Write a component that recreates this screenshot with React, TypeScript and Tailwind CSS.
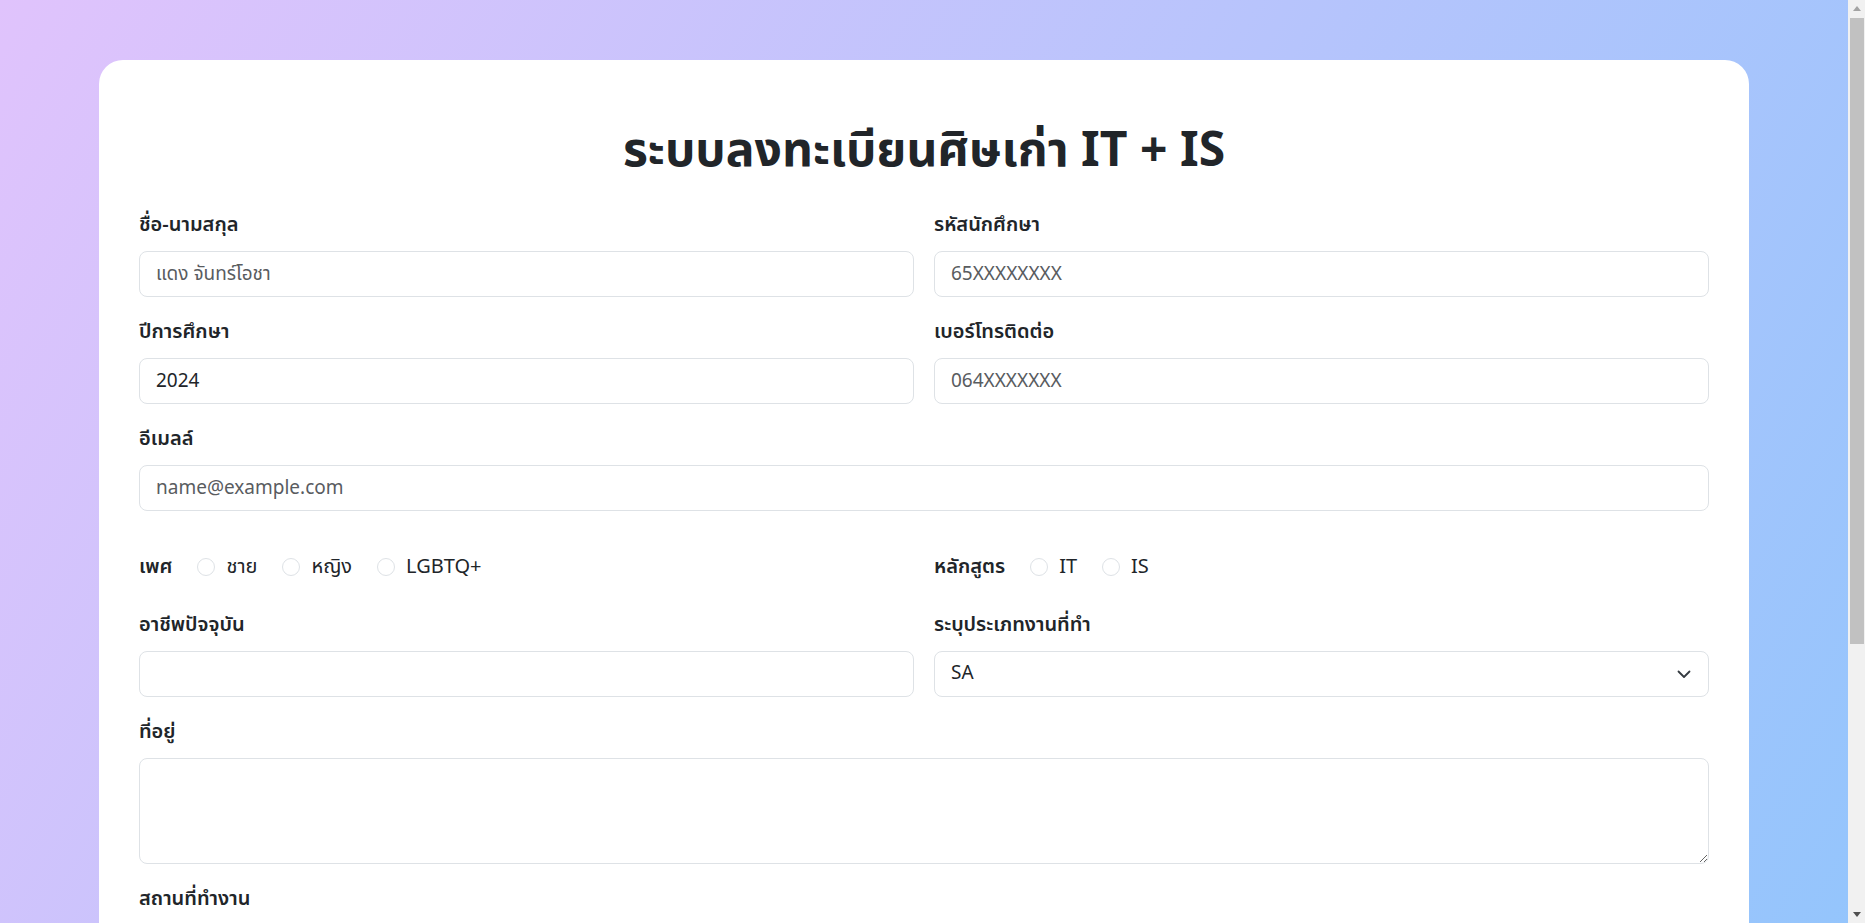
import { useState } from "react";

const FONT = `font-['Noto_Sans_Thai','Noto_Sans','Liberation_Sans',sans-serif]`;

function Field({ label, children }: { label: string; children: React.ReactNode }) {
  return (
    <div className="flex flex-col">
      <label className="text-[20px] leading-[24px] font-semibold text-[#212529] mb-[14px]">{label}</label>
      {children}
    </div>
  );
}

const inputCls =
  "w-full h-[46px] px-4 rounded-lg border border-[#dee2e6] bg-white text-[19px] text-[#212529] placeholder:text-[#595c5f] outline-none";

function Radio({ label }: { label: string }) {
  return (
    <label className="flex items-center gap-[11px] text-[20px] text-[#212529]">
      <span className="w-[18px] h-[18px] rounded-full border border-[#dee2e6] bg-white" />
      {label}
    </label>
  );
}

function Scrollbar() {
  return (
    <div className="w-[17px] h-full bg-[#f1f1f1] flex flex-col items-center shrink-0">
      <div className="h-[17px] flex items-center justify-center">
        <svg width="8" height="5" viewBox="0 0 8 5"><path d="M0 5 4 0 8 5Z" fill="#a3a3a3" /></svg>
      </div>
      <div className="w-[14px] h-[626px] bg-[#c1c1c1] mt-px" />
      <div className="flex-1" />
      <div className="h-[17px] flex items-center justify-center">
        <svg width="8" height="5" viewBox="0 0 8 5"><path d="M0 0 4 5 8 0Z" fill="#505050" /></svg>
      </div>
    </div>
  );
}

export default function App() {
  const [job, setJob] = useState("SA");
  return (
    <div className={`flex h-screen w-full overflow-hidden ${FONT}`}>
      <div className="flex-1 h-full overflow-hidden">
        <div className="w-full bg-[linear-gradient(120deg,#e0c3fc_0%,#8ec5fc_100%)] py-[60px]">
          <div className="mx-auto w-[1650px] bg-white rounded-3xl px-10 pt-[68px] pb-10">
            <h1 className="text-center text-[48px] leading-[48px] font-bold text-[#212529] mb-[37px]">
              ระบบลงทะเบียนศิษเก่า IT + IS
            </h1>

            <div className="grid grid-cols-2 gap-x-5 gap-y-[23px]">
              <Field label="ชื่อ-นามสกุล">
                <input className={inputCls} placeholder="แดง จันทร์โอชา" />
              </Field>
              <Field label="รหัสนักศึกษา">
                <input className={inputCls} placeholder="65XXXXXXXX" />
              </Field>
              <Field label="ปีการศึกษา">
                <input className={inputCls} defaultValue="2024" />
              </Field>
              <Field label="เบอร์โทรติดต่อ">
                <input className={inputCls} placeholder="064XXXXXXX" />
              </Field>
              <div className="col-span-2">
                <Field label="อีเมลล์">
                  <input className={inputCls} placeholder="name@example.com" />
                </Field>
              </div>
            </div>

            <div className="grid grid-cols-2 gap-x-5 mt-[44px] mb-[34px]">
              <div className="flex items-center h-6">
                <span className="text-[20px] font-semibold text-[#212529] mr-[25px]">เพศ</span>
                <div className="flex items-center gap-[25px]">
                  <Radio label="ชาย" />
                  <Radio label="หญิง" />
                  <Radio label="LGBTQ+" />
                </div>
              </div>
              <div className="flex items-center h-6">
                <span className="text-[20px] font-semibold text-[#212529] mr-[25px]">หลักสูตร</span>
                <div className="flex items-center gap-[25px]">
                  <Radio label="IT" />
                  <Radio label="IS" />
                </div>
              </div>
            </div>

            <div className="grid grid-cols-2 gap-x-5 gap-y-[23px]">
              <Field label="อาชีพปัจจุบัน">
                <input className={inputCls} />
              </Field>
              <Field label="ระบุประเภทงานที่ทำ">
                <div className="relative">
                  <select
                    value={job}
                    onChange={(e) => setJob(e.target.value)}
                    className={`${inputCls} appearance-none pr-10`}
                  >
                    <option>SA</option>
                    <option>Programmer</option>
                    <option>Network</option>
                    <option>อื่นๆ</option>
                  </select>
                  <svg
                    className="absolute right-[17px] top-1/2 -translate-y-1/2 w-4 h-4 pointer-events-none"
                    viewBox="0 0 16 16"
                    fill="none"
                    stroke="#343a40"
                    strokeWidth="1.8"
                    strokeLinecap="round"
                    strokeLinejoin="round"
                  >
                    <path d="m2.5 5.5 5.5 5.5 5.5-5.5" />
                  </svg>
                </div>
              </Field>
              <div className="col-span-2">
                <Field label="ที่อยู่">
                  <textarea className="block w-full h-[106px] px-4 py-2 rounded-lg border border-[#dee2e6] text-[19px] outline-none" />
                </Field>
              </div>
              <div className="col-span-2">
                <Field label="สถานที่ทำงาน">
                  <input className={inputCls} />
                </Field>
              </div>
              <div className="col-span-2">
                <Field label="ตำแหน่งงาน">
                  <input className={inputCls} />
                </Field>
              </div>
            </div>

            <div className="flex justify-center mt-[40px]">
              <button className="px-10 h-[50px] rounded-lg bg-[#6f7cf6] text-white text-[20px] font-semibold">
                ลงทะเบียน
              </button>
            </div>
          </div>
        </div>
      </div>
      <Scrollbar />
    </div>
  );
}
